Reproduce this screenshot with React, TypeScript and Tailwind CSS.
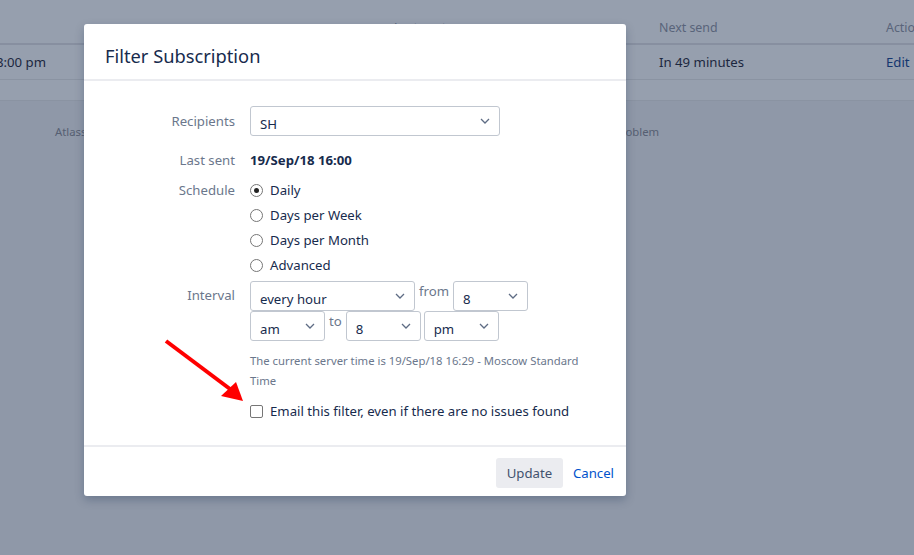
import React from "react";

const Chevron = () => (
  <svg width="10" height="6" viewBox="0 0 10 6" className="shrink-0">
    <path d="M1 1 L5 5 L9 1" fill="none" stroke="#5e6c84" strokeWidth="1.3" />
  </svg>
);

function Select({ value, w }: { value: string; w: string }) {
  return (
    <div
      className={`${w} h-[30px] border border-[#c1c7d0] rounded-[3px] bg-white flex items-center justify-between pl-[9px] pr-[9px] text-[13.2px] text-[#172b4d]`}
    >
      <span className="pt-[7px]">{value}</span>
      <Chevron />
    </div>
  );
}

function Radio({ checked, label }: { checked?: boolean; label: string }) {
  return (
    <div className="h-[25px] flex items-center">
      <div className="w-[13px] h-[13px] rounded-full border border-[#767676] flex items-center justify-center">
        {checked && <div className="w-[5px] h-[5px] rounded-full bg-[#222]" />}
      </div>
      <span className="ml-[7px] text-[#172b4d]">{label}</span>
    </div>
  );
}

export default function App() {
  return (
    <div className="relative w-[914px] h-[555px] overflow-hidden bg-[#8f98a8] font-['Noto_Sans',sans-serif] text-[13.2px]">
      {/* Background page */}
      <div className="h-[101px] bg-[#969fae] border-b border-[#8a93a2]">
        <div className="h-[45px] border-b-2 border-[#878fa0] relative text-[#59647a] text-[12.4px]">
          <span className="absolute left-[394px] top-[19px]">Last sent</span>
          <span className="absolute left-[659px] top-[19px]">Next send</span>
          <span className="absolute left-[886px] top-[19px] whitespace-nowrap">Actions</span>
        </div>
        <div className="h-[35px] border-b border-[#8a93a2] relative text-[#1c2740]">
          <span className="absolute left-[-4px] top-[8px] whitespace-nowrap">8:00 pm</span>
          <span className="absolute left-[659px] top-[8px]">In 49 minutes</span>
          <span className="absolute left-[886px] top-[8px] text-[#14366f]">Edit</span>
        </div>
      </div>
      <div className="relative h-[60px] text-[11.3px] text-[#565f72]">
        <span className="absolute left-[55px] top-[23px]">Atlassian Jira Project Management Software</span>
        <span className="absolute left-[566px] top-[23px]">Report a problem</span>
      </div>

      {/* Modal */}
      <div className="absolute left-[84px] top-[24px] w-[542px] h-[472px] bg-white rounded-[3px] shadow-[0_4px_10px_rgba(9,30,66,0.25)] flex flex-col">
        <div className="pt-[19px] pb-[11px] px-[21px] border-b-2 border-[#ebecf0]">
          <div className="text-[18.3px] leading-[25px] text-[#172b4d]">Filter Subscription</div>
        </div>
        <div className="flex-1 pt-[25px]">
          {/* Recipients */}
          <div className="flex items-center">
            <div className="w-[151px] pt-[2px] text-right text-[#6b778c]">Recipients</div>
            <div className="ml-[15px]">
              <Select value="SH" w="w-[250px]" />
            </div>
          </div>
          {/* Last sent */}
          <div className="flex items-center mt-[15px] h-[20px]">
            <div className="w-[151px] text-right text-[#6b778c]">Last sent</div>
            <div className="ml-[15px] font-bold text-[#172b4d]">19/Sep/18 16:00</div>
          </div>
          {/* Schedule */}
          <div className="flex mt-[7px]">
            <div className="w-[151px] text-right text-[#6b778c] h-[25px] leading-[25px]">Schedule</div>
            <div className="ml-[15px] flex flex-col">
              <Radio checked label="Daily" />
              <Radio label="Days per Week" />
              <Radio label="Days per Month" />
              <Radio label="Advanced" />
            </div>
          </div>
          {/* Interval */}
          <div className="flex mt-[3px]">
            <div className="w-[151px] text-right text-[#6b778c] pt-[4px] leading-[20px]">Interval</div>
            <div className="ml-[15px] flex flex-col">
              <div className="flex items-start">
                <Select value="every hour" w="w-[165px]" />
                <span className="ml-[4px] mr-[4px] text-[#6b778c] leading-[20px]">from</span>
                <Select value="8" w="w-[75px]" />
              </div>
              <div className="flex items-start">
                <Select value="am" w="w-[75px]" />
                <span className="ml-[4px] mr-[4px] text-[#6b778c] leading-[20px]">to</span>
                <Select value="8" w="w-[75px]" />
                <div className="ml-[3px]">
                  <Select value="pm" w="w-[75px]" />
                </div>
              </div>
              <div className="mt-[10px] w-[340px] text-[11.3px] leading-[20px] text-[#6b778c]">
                The current server time is 19/Sep/18 16:29 - Moscow Standard Time
              </div>
              <div className="mt-[10px] h-[20px] flex items-center">
                <div className="w-[13px] h-[13px] border border-[#767676] rounded-[2px]" />
                <span className="ml-[7px] pt-[1px] text-[#172b4d]">Email this filter, even if there are no issues found</span>
              </div>
            </div>
          </div>
        </div>
        <div className="border-t-2 border-[#ebecf0] h-[51px] flex items-start justify-end pt-[11px] pr-[12px]">
          <button className="h-[30px] w-[67px] pt-[2px] rounded-[3px] bg-[#ebecf0] text-[#42526e] text-[13.2px]">Update</button>
          <span className="ml-[10px] h-[30px] leading-[30px] text-[#0052cc]">Cancel</span>
        </div>
      </div>

      {/* Red arrow */}
      <svg className="absolute left-0 top-0 pointer-events-none" width="914" height="555">
        <line x1="166" y1="341" x2="230" y2="389" stroke="#ff0000" strokeWidth="4" />
        <polygon points="243,401 221,396 236,382" fill="#ff0000" />
      </svg>
    </div>
  );
}
